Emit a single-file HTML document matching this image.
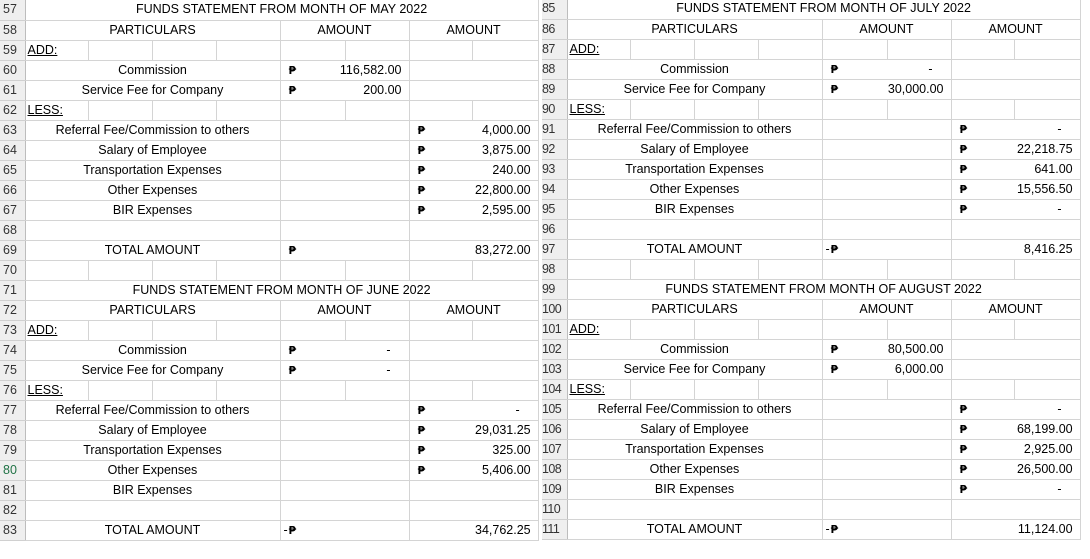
<!DOCTYPE html>
<html><head><meta charset="utf-8"><style>
body{margin:0;width:1090px;height:559px;background:#fff;position:relative;overflow:hidden}
table{border-collapse:collapse;table-layout:fixed;position:absolute;font-family:"Liberation Sans",sans-serif;font-size:12.5px;color:#000}
td{border-right:1px solid #d4d4d4;border-bottom:1px solid #d4d4d4;height:20px;box-sizing:border-box;padding:0;white-space:nowrap;overflow:hidden;text-align:center;line-height:19px}
td.h{background:#efefef;color:#333;text-align:left;padding-left:3px;border-right:1px solid #bdbdbd;border-bottom:1px solid #d0d0d0;font-size:12.5px}
#R td.h{padding-left:0;font-size:12.5px;letter-spacing:-0.6px}
td.l{text-align:left;padding-left:2px}
td.a{text-align:right;padding-right:7px;position:relative}
td.d{text-align:right;padding-right:18px;position:relative}
.p{position:absolute;left:8px;top:0;font-family:"DejaVu Sans",sans-serif;font-size:11px;font-weight:bold}
.m{position:absolute;left:3px;top:0}
#L{left:0;top:0;width:538px}
#R{left:542px;top:-1px;width:538px}
</style></head><body>
<table id="L">
<colgroup><col style="width:25px"><col style="width:63px"><col style="width:64px"><col style="width:64px"><col style="width:64px"><col style="width:65px"><col style="width:64px"><col style="width:63px"><col style="width:66px"></colgroup>
<tr><td class="h">57</td><td colspan="8">FUNDS STATEMENT FROM MONTH OF MAY 2022</td></tr>
<tr><td class="h">58</td><td colspan="4">PARTICULARS</td><td colspan="2">AMOUNT</td><td colspan="2">AMOUNT</td></tr>
<tr><td class="h">59</td><td class="l"><u>ADD:</u></td><td></td><td></td><td></td><td></td><td></td><td></td><td></td></tr>
<tr><td class="h">60</td><td colspan="4">Commission</td><td colspan="2" class="a"><span class="p">₱</span>116,582.00</td><td colspan="2"></td></tr>
<tr><td class="h">61</td><td colspan="4">Service Fee for Company</td><td colspan="2" class="a"><span class="p">₱</span>200.00</td><td colspan="2"></td></tr>
<tr><td class="h">62</td><td class="l"><u>LESS:</u></td><td></td><td></td><td></td><td></td><td></td><td></td><td></td></tr>
<tr><td class="h">63</td><td colspan="4">Referral Fee/Commission to others</td><td colspan="2"></td><td colspan="2" class="a"><span class="p">₱</span>4,000.00</td></tr>
<tr><td class="h">64</td><td colspan="4">Salary of Employee</td><td colspan="2"></td><td colspan="2" class="a"><span class="p">₱</span>3,875.00</td></tr>
<tr><td class="h">65</td><td colspan="4">Transportation Expenses</td><td colspan="2"></td><td colspan="2" class="a"><span class="p">₱</span>240.00</td></tr>
<tr><td class="h">66</td><td colspan="4">Other Expenses</td><td colspan="2"></td><td colspan="2" class="a"><span class="p">₱</span>22,800.00</td></tr>
<tr><td class="h">67</td><td colspan="4">BIR Expenses</td><td colspan="2"></td><td colspan="2" class="a"><span class="p">₱</span>2,595.00</td></tr>
<tr><td class="h">68</td><td colspan="4"></td><td colspan="2"></td><td colspan="2"></td></tr>
<tr><td class="h">69</td><td colspan="4">TOTAL AMOUNT</td><td colspan="2" class="a"><span class="p">₱</span></td><td colspan="2" class="a">83,272.00</td></tr>
<tr><td class="h">70</td><td></td><td></td><td></td><td></td><td></td><td></td><td></td><td></td></tr>
<tr><td class="h">71</td><td colspan="8">FUNDS STATEMENT FROM MONTH OF JUNE 2022</td></tr>
<tr><td class="h">72</td><td colspan="4">PARTICULARS</td><td colspan="2">AMOUNT</td><td colspan="2">AMOUNT</td></tr>
<tr><td class="h">73</td><td class="l"><u>ADD:</u></td><td></td><td></td><td></td><td></td><td></td><td></td><td></td></tr>
<tr><td class="h">74</td><td colspan="4">Commission</td><td colspan="2" class="d"><span class="p">₱</span>-</td><td colspan="2"></td></tr>
<tr><td class="h">75</td><td colspan="4">Service Fee for Company</td><td colspan="2" class="d"><span class="p">₱</span>-</td><td colspan="2"></td></tr>
<tr><td class="h">76</td><td class="l"><u>LESS:</u></td><td></td><td></td><td></td><td></td><td></td><td></td><td></td></tr>
<tr><td class="h">77</td><td colspan="4">Referral Fee/Commission to others</td><td colspan="2"></td><td colspan="2" class="d"><span class="p">₱</span>-</td></tr>
<tr><td class="h">78</td><td colspan="4">Salary of Employee</td><td colspan="2"></td><td colspan="2" class="a"><span class="p">₱</span>29,031.25</td></tr>
<tr><td class="h">79</td><td colspan="4">Transportation Expenses</td><td colspan="2"></td><td colspan="2" class="a"><span class="p">₱</span>325.00</td></tr>
<tr><td class="h" style="color:#217346">80</td><td colspan="4">Other Expenses</td><td colspan="2"></td><td colspan="2" class="a"><span class="p">₱</span>5,406.00</td></tr>
<tr><td class="h">81</td><td colspan="4">BIR Expenses</td><td colspan="2"></td><td colspan="2"></td></tr>
<tr><td class="h">82</td><td colspan="4"></td><td colspan="2"></td><td colspan="2"></td></tr>
<tr><td class="h">83</td><td colspan="4">TOTAL AMOUNT</td><td colspan="2" class="a"><span class="m">-</span><span class="p">₱</span></td><td colspan="2" class="a">34,762.25</td></tr>
</table>
<table id="R">
<colgroup><col style="width:25px"><col style="width:63px"><col style="width:64px"><col style="width:64px"><col style="width:64px"><col style="width:65px"><col style="width:64px"><col style="width:63px"><col style="width:66px"></colgroup>
<tr><td class="h">85</td><td colspan="8">FUNDS STATEMENT FROM MONTH OF JULY 2022</td></tr>
<tr><td class="h">86</td><td colspan="4">PARTICULARS</td><td colspan="2">AMOUNT</td><td colspan="2">AMOUNT</td></tr>
<tr><td class="h">87</td><td class="l"><u>ADD:</u></td><td></td><td></td><td></td><td></td><td></td><td></td><td></td></tr>
<tr><td class="h">88</td><td colspan="4">Commission</td><td colspan="2" class="d"><span class="p">₱</span>-</td><td colspan="2"></td></tr>
<tr><td class="h">89</td><td colspan="4">Service Fee for Company</td><td colspan="2" class="a"><span class="p">₱</span>30,000.00</td><td colspan="2"></td></tr>
<tr><td class="h">90</td><td class="l"><u>LESS:</u></td><td></td><td></td><td></td><td></td><td></td><td></td><td></td></tr>
<tr><td class="h">91</td><td colspan="4">Referral Fee/Commission to others</td><td colspan="2"></td><td colspan="2" class="d"><span class="p">₱</span>-</td></tr>
<tr><td class="h">92</td><td colspan="4">Salary of Employee</td><td colspan="2"></td><td colspan="2" class="a"><span class="p">₱</span>22,218.75</td></tr>
<tr><td class="h">93</td><td colspan="4">Transportation Expenses</td><td colspan="2"></td><td colspan="2" class="a"><span class="p">₱</span>641.00</td></tr>
<tr><td class="h">94</td><td colspan="4">Other Expenses</td><td colspan="2"></td><td colspan="2" class="a"><span class="p">₱</span>15,556.50</td></tr>
<tr><td class="h">95</td><td colspan="4">BIR Expenses</td><td colspan="2"></td><td colspan="2" class="d"><span class="p">₱</span>-</td></tr>
<tr><td class="h">96</td><td colspan="4"></td><td colspan="2"></td><td colspan="2"></td></tr>
<tr><td class="h">97</td><td colspan="4">TOTAL AMOUNT</td><td colspan="2" class="a"><span class="m">-</span><span class="p">₱</span></td><td colspan="2" class="a">8,416.25</td></tr>
<tr><td class="h">98</td><td></td><td></td><td></td><td></td><td></td><td></td><td></td><td></td></tr>
<tr><td class="h">99</td><td colspan="8">FUNDS STATEMENT FROM MONTH OF AUGUST 2022</td></tr>
<tr><td class="h">100</td><td colspan="4">PARTICULARS</td><td colspan="2">AMOUNT</td><td colspan="2">AMOUNT</td></tr>
<tr><td class="h">101</td><td class="l"><u>ADD:</u></td><td></td><td></td><td></td><td></td><td></td><td></td><td></td></tr>
<tr><td class="h">102</td><td colspan="4">Commission</td><td colspan="2" class="a"><span class="p">₱</span>80,500.00</td><td colspan="2"></td></tr>
<tr><td class="h">103</td><td colspan="4">Service Fee for Company</td><td colspan="2" class="a"><span class="p">₱</span>6,000.00</td><td colspan="2"></td></tr>
<tr><td class="h">104</td><td class="l"><u>LESS:</u></td><td></td><td></td><td></td><td></td><td></td><td></td><td></td></tr>
<tr><td class="h">105</td><td colspan="4">Referral Fee/Commission to others</td><td colspan="2"></td><td colspan="2" class="d"><span class="p">₱</span>-</td></tr>
<tr><td class="h">106</td><td colspan="4">Salary of Employee</td><td colspan="2"></td><td colspan="2" class="a"><span class="p">₱</span>68,199.00</td></tr>
<tr><td class="h">107</td><td colspan="4">Transportation Expenses</td><td colspan="2"></td><td colspan="2" class="a"><span class="p">₱</span>2,925.00</td></tr>
<tr><td class="h">108</td><td colspan="4">Other Expenses</td><td colspan="2"></td><td colspan="2" class="a"><span class="p">₱</span>26,500.00</td></tr>
<tr><td class="h">109</td><td colspan="4">BIR Expenses</td><td colspan="2"></td><td colspan="2" class="d"><span class="p">₱</span>-</td></tr>
<tr><td class="h">110</td><td colspan="4"></td><td colspan="2"></td><td colspan="2"></td></tr>
<tr><td class="h">111</td><td colspan="4">TOTAL AMOUNT</td><td colspan="2" class="a"><span class="m">-</span><span class="p">₱</span></td><td colspan="2" class="a">11,124.00</td></tr>
</table>
</body></html>
